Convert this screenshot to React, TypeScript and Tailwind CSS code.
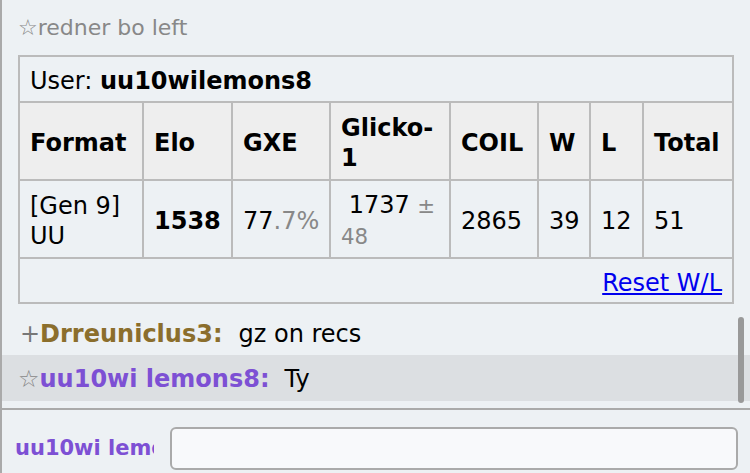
import React from "react";

const cell = "border-r-2 border-b-2 border-[#bbbbbb] px-[10px] pt-[4px] align-middle text-left";
const th = cell + " bg-[#eeeeee] font-bold";

export default function App() {
  return (
    <div className="w-[750px] h-[473px] bg-[#edf1f4] border-l-2 border-[#aaaaaa] flex flex-col overflow-hidden relative font-['DejaVu_Sans',sans-serif] text-black">
      <div className="h-[408px] relative pt-[12px] flex flex-col">
        <div className="pl-[16px] h-[31px] leading-[31px] text-[22px] text-[#888888]">☆redner bo left</div>
        <div className="mt-[12px] ml-[16px]">
          <table className="table-fixed border-separate border-spacing-0 w-[716px] border-l-2 border-t-2 border-[#bbbbbb] text-[24px] leading-[30px]">
            <colgroup>
              <col className="w-[124px]" />
              <col className="w-[89px]" />
              <col className="w-[98px]" />
              <col className="w-[120px]" />
              <col className="w-[88px]" />
              <col className="w-[52px]" />
              <col className="w-[53px]" />
              <col className="w-[90px]" />
            </colgroup>
            <tbody>
              <tr>
                <td colSpan={8} className={cell + " h-[46px]"}>
                  User: <b>uu10wilemons8</b>
                </td>
              </tr>
              <tr>
                <th className={th + " h-[78px]"}>Format</th>
                <th className={th}>Elo</th>
                <th className={th}>GXE</th>
                <th className={th}>Glicko-1</th>
                <th className={th}>COIL</th>
                <th className={th}>W</th>
                <th className={th}>L</th>
                <th className={th}>Total</th>
              </tr>
              <tr>
                <td className={cell + " h-[78px]"}>[Gen 9] UU</td>
                <td className={cell}><b>1538</b></td>
                <td className={cell}>77<span className="text-[#888888]">.7%</span></td>
                <td className={cell}>{"\u00a0"}1737 <span className="text-[21.33px] text-[#888888]">± 48</span></td>
                <td className={cell}>2865</td>
                <td className={cell}>39</td>
                <td className={cell}>12</td>
                <td className={cell}>51</td>
              </tr>
              <tr>
                <td colSpan={8} className={cell + " h-[45px] text-right"}>
                  <a href="#" className="text-[#0000ee] underline">Reset W/L</a>
                </td>
              </tr>
            </tbody>
          </table>
        </div>
        <div className="mt-[5px] h-[46px] flex items-center pt-[4px] pl-[18px] text-[24px] whitespace-nowrap">
          <span className="text-[#777777]">+</span>
          <b className="text-[#8b6e2c]">Drreuniclus3:</b>
          <span className="ml-[16px]">gz on recs</span>
        </div>
        <div className="h-[46px] flex items-center pt-[1px] pl-[16px] text-[24px] bg-[#dcdfe2] whitespace-nowrap">
          <span className="text-[#888888]">☆</span>
          <b className="text-[#7d50d4]">uu10wi lemons8:</b>
          <span className="ml-[15px]">Ty</span>
        </div>
        <div className="absolute left-[736px] top-[317px] w-[6px] h-[86px] rounded-full bg-[#999999]" />
      </div>
      <div className="h-[2px] bg-[#aaaaaa]" />
      <div className="flex items-start pt-[17px] pl-[13px]">
        <div className="w-[139px] h-[43px] overflow-hidden whitespace-nowrap flex items-center text-[21px] font-bold text-[#7d50d4]">
          uu10wi lemons8
        </div>
        <div className="ml-[16px] w-[568px] h-[43px] rounded-[6px] border-2 border-[#aaaaaa] bg-[#f8f9fb]" />
      </div>
    </div>
  );
}
